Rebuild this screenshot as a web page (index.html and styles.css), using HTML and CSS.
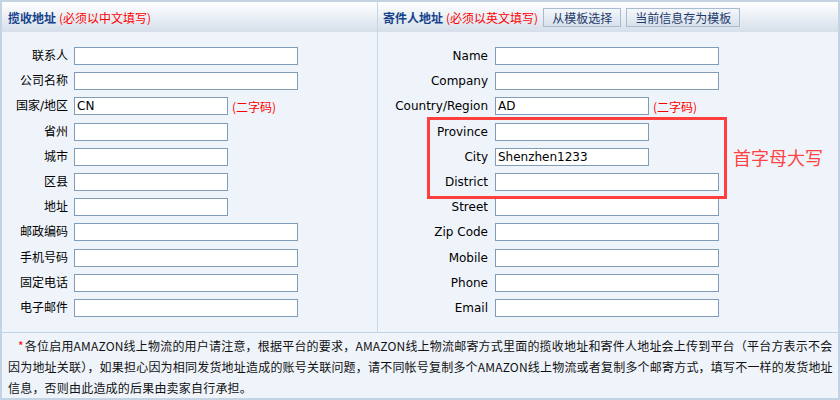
FILE: index.html
```html
<html>
    <head>
        <meta charset="utf-8">
        <link rel="stylesheet" href="styles.css">
    </head>
    <body>
        <div class="frame">
            <div class="cols">
                <div class="col col-left">
                    <div class="col-head">
                        <span class="title">揽收地址</span>
                        <span class="hint">(必须以中文填写)</span>
                    </div>
                    <div class="form">
                        <label>联系人</label><div class="field"><input class="long"></div>
                        <label>公司名称</label><div class="field"><input class="long"></div>
                        <label>国家/地区</label><div class="field"><input class="short" value="CN"><span class="code">(二字码)</span></div>
                        <label>省州</label><div class="field"><input class="short"></div>
                        <label>城市</label><div class="field"><input class="short"></div>
                        <label>区县</label><div class="field"><input class="short"></div>
                        <label>地址</label><div class="field"><input class="short"></div>
                        <label>邮政编码</label><div class="field"><input class="long"></div>
                        <label>手机号码</label><div class="field"><input class="long"></div>
                        <label>固定电话</label><div class="field"><input class="long"></div>
                        <label>电子邮件</label><div class="field"><input class="long"></div>
                    </div>
                </div>
                <div class="col col-right">
                    <div class="col-head">
                        <span class="title">寄件人地址</span>
                        <span class="hint">(必须以英文填写)</span>
                        <button class="btn">从模板选择</button>
                        <button class="btn">当前信息存为模板</button>
                    </div>
                    <div class="form">
                        <label>Name</label><div class="field"><input class="long"></div>
                        <label>Company</label><div class="field"><input class="long"></div>
                        <label>Country/Region</label><div class="field"><input class="short" value="AD"><span class="code">(二字码)</span></div>
                        <label>Province</label><div class="field"><input class="short"></div>
                        <label>City</label><div class="field"><input class="short" value="Shenzhen1233"></div>
                        <label>District</label><div class="field"><input class="long"></div>
                        <label>Street</label><div class="field"><input class="long"></div>
                        <label>Zip Code</label><div class="field"><input class="long"></div>
                        <label>Mobile</label><div class="field"><input class="long"></div>
                        <label>Phone</label><div class="field"><input class="long"></div>
                        <label>Email</label><div class="field"><input class="long"></div>
                    </div>
                    <!-- annotation drawn over the form -->
                    <div class="mark-box"></div>
                    <div class="mark-text">首字母大写</div>
                </div>
            </div>
            <div class="notice">
                <span class="star">*</span>各位启用AMAZON线上物流的用户请注意，根据平台的要求，AMAZON线上物流邮寄方式里面的揽收地址和寄件人地址会上传到平台（平台方表示不会因为地址关联），如果担心因为相同发货地址造成的账号关联问题，请不同帐号复制多个AMAZON线上物流或者复制多个邮寄方式，填写不一样的发货地址信息，否则由此造成的后果由卖家自行承担。
            </div>
        </div>
    </body>
</html>
```

FILE: styles.css
```css
body {
    margin: 0;
    font-family: "DejaVu Sans", "Noto Sans CJK SC", sans-serif;
    font-size: 12px;
    color: #000;
}
.frame {
    width: 840px;
    height: 400px;
    box-sizing: border-box;
    border: 2px solid #c4d3e3;
    background-color: #eff4fb;
    display: flex;
    flex-direction: column;
}
.cols {
    display: flex;
    height: 330px;
    flex-shrink: 0;
}
.col {
    position: relative;
}
.col-left {
    width: 375px;
    border-right: 1px solid #c7d5e4;
}
.col-right {
    flex: 1;
}
.col-head {
    height: 30px;
    display: flex;
    align-items: center;
    padding-left: 6px;
    background: linear-gradient(#ffffff, #d5dfea);
    font-family: "Noto Sans CJK SC", sans-serif;
}
.col-right .col-head {
    padding-left: 5px;
}
.title {
    font-weight: bold;
    color: #15428b;
}
.hint {
    color: #ff0000;
    margin-left: 3px;
}
.btn {
    height: 19px;
    margin-left: 5px;
    padding: 0 8px;
    border: 1px solid #a9bbce;
    background: linear-gradient(#f4f7fb, #d8e1ec);
    color: #1e3a6a;
    font-family: "Noto Sans CJK SC", sans-serif;
    font-size: 12px;
    line-height: 17px;
}
.form {
    display: grid;
    grid-template-columns: 66px auto;
    column-gap: 6px;
    row-gap: 7.2px;
    padding-top: 15px;
}
.col-right .form {
    grid-template-columns: 110px auto;
    column-gap: 7px;
}
.form label {
    height: 18px;
    line-height: 18px;
    text-align: right;
    white-space: nowrap;
}
.field {
    display: flex;
    align-items: center;
    height: 18px;
}
input {
    height: 18px;
    box-sizing: border-box;
    border: 1px solid #7f9db9;
    background: #fff;
    padding: 0 2px;
    margin: 0;
    font-family: "DejaVu Sans", sans-serif;
    font-size: 12px;
    outline: none;
}
input.long {
    width: 224px;
}
input.short {
    width: 154px;
}
.code {
    color: #ff0000;
    margin-left: 4px;
    font-family: "Noto Sans CJK SC", sans-serif;
}
.mark-box {
    position: absolute;
    left: 49px;
    top: 115px;
    width: 300px;
    height: 82px;
    box-sizing: border-box;
    border: 3px solid #ff3e3e;
}
.mark-text {
    position: absolute;
    left: 355px;
    top: 144px;
    font-family: "Noto Sans CJK SC", sans-serif;
    font-size: 18px;
    line-height: 22px;
    color: #ff4343;
}
.notice {
    flex: 1;
    border-top: 1px solid #c4d3e3;
    padding: 2px 4px 0 6px;
    font-family: "Noto Sans CJK SC", sans-serif;
    font-size: 12px;
    line-height: 21px;
    letter-spacing: 0.2px;
    text-indent: 10px;
    color: #111;
}
.star {
    color: #ff0000;
    margin-right: 1px;
}
```
